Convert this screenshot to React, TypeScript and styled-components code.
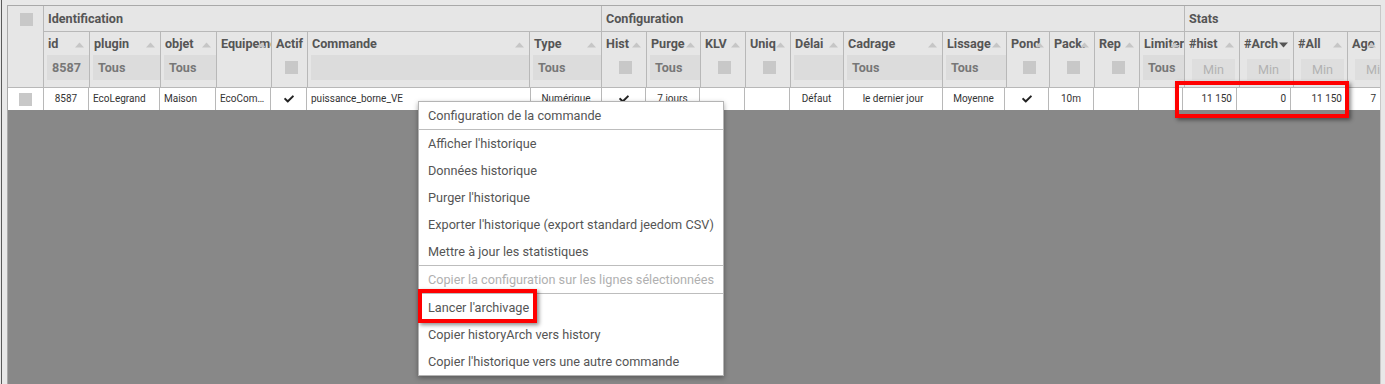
import React from "react";
import styled, { createGlobalStyle } from "styled-components";
import { FaCheck } from "react-icons/fa";

const GlobalStyle = createGlobalStyle`
  html, body { margin: 0; padding: 0; background: #e8e8e8; }
  body { font-family: Roboto, "Liberation Sans", Arial, sans-serif; }
  * { box-sizing: border-box; }
`;

const HEAD_COLS = [36, 46, 71, 56, 55, 36, 222, 72, 45, 54, 45, 45, 53, 99, 64, 43, 45, 45, 45, 55, 54, 54, 34];
const BODY_COLS = [36, 45, 71, 56, 55, 36, 224, 71, 44, 54, 45, 45, 54, 99, 62, 44, 45, 45, 44, 54, 54, 56, 34];
const tpl = (c: number[]) => c.map((w) => `${w}px`).join(" ");

type Filter = "text" | "empty" | "check" | "min" | "none";
type Sort = "none" | "asc" | "desc";

const columns: { title: string; filter: Filter; value?: string; sort: Sort }[] = [
  { title: "id", filter: "text", value: "8587", sort: "asc" },
  { title: "plugin", filter: "text", value: "Tous", sort: "asc" },
  { title: "objet", filter: "text", value: "Tous", sort: "asc" },
  { title: "Equipement", filter: "none", sort: "asc" },
  { title: "Actif", filter: "check", sort: "none" },
  { title: "Commande", filter: "empty", sort: "asc" },
  { title: "Type", filter: "text", value: "Tous", sort: "asc" },
  { title: "Hist", filter: "check", sort: "asc" },
  { title: "Purge", filter: "text", value: "Tous", sort: "asc" },
  { title: "KLV", filter: "check", sort: "asc" },
  { title: "Uniq", filter: "check", sort: "asc" },
  { title: "Délai", filter: "empty", sort: "asc" },
  { title: "Cadrage", filter: "text", value: "Tous", sort: "asc" },
  { title: "Lissage", filter: "text", value: "Tous", sort: "asc" },
  { title: "Pond", filter: "check", sort: "asc" },
  { title: "Pack.", filter: "check", sort: "asc" },
  { title: "Rep", filter: "check", sort: "asc" },
  { title: "Limiter", filter: "text", value: "Tous", sort: "asc" },
  { title: "#hist", filter: "min", sort: "asc" },
  { title: "#Arch", filter: "min", sort: "desc" },
  { title: "#All", filter: "min", sort: "asc" },
  { title: "Age", filter: "min", sort: "asc" },
];

type Align = "left" | "center" | "right";
const row: { v: React.ReactNode; a: Align }[] = [
  { v: "8587", a: "center" },
  { v: "EcoLegrand", a: "left" },
  { v: "Maison", a: "left" },
  { v: "EcoCompteur", a: "left" },
  { v: "check", a: "center" },
  { v: "puissance_borne_VE", a: "left" },
  { v: "Numérique", a: "center" },
  { v: "check", a: "center" },
  { v: "7 jours", a: "center" },
  { v: "", a: "center" },
  { v: "", a: "center" },
  { v: "Défaut", a: "center" },
  { v: "le dernier jour", a: "center" },
  { v: "Moyenne", a: "center" },
  { v: "check", a: "center" },
  { v: "10m", a: "center" },
  { v: "", a: "center" },
  { v: "", a: "center" },
  { v: "11 150", a: "right" },
  { v: "0", a: "right" },
  { v: "11 150", a: "right" },
  { v: "7", a: "right" },
];

const menu: ({ label: string; disabled?: boolean } | "sep")[] = [
  { label: "Configuration de la commande" },
  "sep",
  { label: "Afficher l'historique" },
  { label: "Données historique" },
  { label: "Purger l'historique" },
  { label: "Exporter l'historique (export standard jeedom CSV)" },
  { label: "Mettre à jour les statistiques" },
  "sep",
  { label: "Copier la configuration sur les lignes sélectionnées", disabled: true },
  "sep",
  { label: "Lancer l'archivage" },
  { label: "Copier historyArch vers history" },
  { label: "Copier l'historique vers une autre commande" },
];

const Page = styled.div`
  position: relative;
  width: 1385px;
  height: 384px;
  overflow: hidden;
  display: flex;
  padding: 5px 4px 0 1px;
  background: #e8e8e8;
`;

const Rail = styled.div`
  width: 1px;
  margin-top: -5px;
  background: #5a5a5a;
  margin-right: 5px;
  flex: none;
`;

const Frame = styled.div`
  flex: 1;
  min-width: 0;
  display: flex;
  flex-direction: column;
  overflow: hidden;
  border-top: 1px solid #a9a9a9;
  border-left: 1px solid #a9a9a9;
  border-right: 1px solid #c8c8c8;
  background: #888888;
`;

const Head = styled.div`
  display: grid;
  grid-template-columns: ${tpl(HEAD_COLS)};
  grid-template-rows: 26px 56px;
  width: max-content;
  background: #e6e6e6;
  color: #555;
`;

const Corner = styled.div`
  grid-row: 1 / 3;
  grid-column: 1;
  border-right: 1px solid #b8b8b8;
  border-bottom: 1px solid #b8b8b8;
  display: flex;
  justify-content: center;
  padding: 7px 0 0 2px;
`;

const Square = styled.span`
  display: block;
  width: 13px;
  height: 13px;
  background: #c8c8c8;
`;

const Group = styled.div<{ $span: number }>`
  grid-column: span ${(p) => p.$span};
  border-right: 1px solid #b8b8b8;
  border-bottom: 1px solid #b8b8b8;
  font-weight: 700;
  font-size: 12.6px;
  line-height: 25px;
  padding-left: 4px;
  white-space: nowrap;
`;

const ColHead = styled.div`
  position: relative;
  border-right: 1px solid #b8b8b8;
  border-bottom: 1px solid #b8b8b8;
  padding: 4px 0 0 3px;
  display: flex;
  flex-direction: column;
  min-width: 0;
  overflow: hidden;
`;

const Title = styled.div`
  font-weight: 700;
  font-size: 12.6px;
  line-height: 16px;
  padding-left: 1px;
  white-space: nowrap;
  overflow: hidden;
  color: #555;
`;

const SortIcon = styled.svg`
  position: absolute;
  right: 5px;
  top: 10px;
`;

const FilterBox = styled.div`
  margin-top: 3px;
  height: 25px;
  background: #dcdcdc;
  font-weight: 700;
  font-size: 12.6px;
  line-height: 25px;
  padding-left: 5px;
  color: #777;
  white-space: nowrap;
  overflow: hidden;
`;

const FilterSlot = styled.div`
  margin-top: 3px;
  height: 25px;
  display: flex;
  align-items: center;
  justify-content: center;
`;

const MinBox = styled.div`
  flex: none;
  width: 43px;
  margin: 7px 0 0 4px;
  height: 21px;
  background: #dedede;
  font-size: 12.6px;
  line-height: 21px;
  text-align: center;
  color: #b2b2b2;
  white-space: nowrap;
`;

const BodyRow = styled.div`
  display: grid;
  grid-template-columns: ${tpl(BODY_COLS)};
  height: 22px;
  width: max-content;
  background: #fff;
  color: #333;
`;

const Cell = styled.div<{ $align: Align }>`
  border-right: 1px solid #b8b8b8;
  font-size: 10px;
  line-height: 22px;
  padding: 0 4px;
  white-space: nowrap;
  overflow: hidden;
  text-overflow: ellipsis;
  text-align: ${(p) => p.$align};
  display: ${(p) => (p.$align === "center" ? "flex" : "block")};
  justify-content: center;
  align-items: center;
`;

const Filler = styled.div`
  flex: 1;
  background: #888888;
`;

const Menu = styled.div`
  position: absolute;
  left: 418px;
  top: 101px;
  width: 306px;
  background: #fff;
  border: 1px solid #b4b4b4;
  box-shadow: 0 2px 5px rgba(0, 0, 0, 0.35);
  display: flex;
  flex-direction: column;
`;

const MenuItem = styled.div<{ $disabled?: boolean }>`
  height: 27px;
  line-height: 27px;
  padding: 0 9px;
  font-size: 12.7px;
  white-space: nowrap;
  color: ${(p) => (p.$disabled ? "#b0b0b0" : "#555")};
`;

const MenuSep = styled.div`
  height: 1px;
  background: #bdbdbd;
`;

const Highlight = styled.div`
  position: absolute;
  border: 4px solid #ff0000;
  box-shadow: 2px 2px 4px rgba(0, 0, 0, 0.45);
  pointer-events: none;
`;

const SortArrow = ({ dir }: { dir: Sort }) => {
  if (dir === "none") return null;
  return (
    <SortIcon width="9" height="6" viewBox="0 0 9 6">
      {dir === "asc" ? (
        <polygon points="0,5.5 4.5,0.5 9,5.5" fill="#c6c6c6" />
      ) : (
        <polygon points="0,0.5 9,0.5 4.5,5.5" fill="#555" />
      )}
    </SortIcon>
  );
};

const FilterView = ({ f, value }: { f: Filter; value?: string }) => {
  switch (f) {
    case "text":
      return <FilterBox>{value}</FilterBox>;
    case "empty":
      return <FilterBox />;
    case "check":
      return (
        <FilterSlot>
          <Square />
        </FilterSlot>
      );
    case "min":
      return <MinBox>Min</MinBox>;
    default:
      return null;
  }
};

export default function App() {
  return (
    <>
      <GlobalStyle />
      <Page>
        <Rail />
        <Frame>
          <Head>
            <Corner>
              <Square />
            </Corner>
            <Group $span={7}>Identification</Group>
            <Group $span={11}>Configuration</Group>
            <Group $span={4}>Stats</Group>
            {columns.map((c) => (
              <ColHead key={c.title}>
                <Title>{c.title}</Title>
                <SortArrow dir={c.sort} />
                <FilterView f={c.filter} value={c.value} />
              </ColHead>
            ))}
          </Head>
          <BodyRow>
            <Cell $align="center">
              <Square />
            </Cell>
            {row.map((c, i) => (
              <Cell key={i} $align={c.a}>
                {c.v === "check" ? <FaCheck size={10} color="#222" /> : c.v}
              </Cell>
            ))}
          </BodyRow>
          <Filler />
        </Frame>
        <Menu>
          {menu.map((m, i) =>
            m === "sep" ? (
              <MenuSep key={i} />
            ) : (
              <MenuItem key={i} $disabled={m.disabled}>
                {m.label}
              </MenuItem>
            )
          )}
        </Menu>
        <Highlight style={{ left: 418, top: 289, width: 119, height: 34 }} />
        <Highlight style={{ left: 1175, top: 81, width: 174, height: 37 }} />
      </Page>
    </>
  );
}
